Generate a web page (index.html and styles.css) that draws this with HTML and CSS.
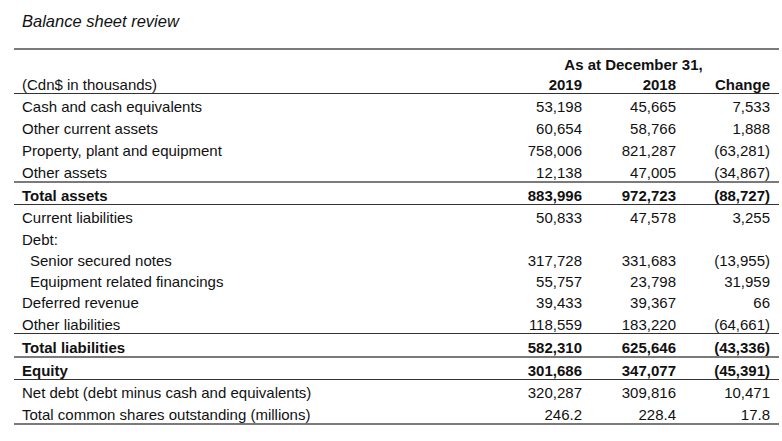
FILE: index.html
```html
<!DOCTYPE html>
<html lang="en">
<head>
<meta charset="utf-8">
<title>Balance sheet review</title>
<link rel="stylesheet" href="styles.css">
</head>
<body>
<div class="page">
  <h1 class="title">Balance sheet review</h1>
  <table class="bs">
    <colgroup>
      <col class="c-label"><col class="c-num"><col class="c-num"><col class="c-chg">
    </colgroup>
    <thead>
      <tr class="h1">
        <th></th>
        <th colspan="3" class="span">As at December 31,</th>
      </tr>
      <tr class="h2 rule-thin">
        <th class="lbl">(Cdn$ in thousands)</th>
        <th class="num">2019</th>
        <th class="num">2018</th>
        <th class="num last">Change</th>
      </tr>
    </thead>
    <tbody>
      <tr class="first"><td class="lbl">Cash and cash equivalents</td><td class="num">53,198</td><td class="num">45,665</td><td class="num last">7,533</td></tr>
      <tr><td class="lbl">Other current assets</td><td class="num">60,654</td><td class="num">58,766</td><td class="num last">1,888</td></tr>
      <tr><td class="lbl">Property, plant and equipment</td><td class="num">758,006</td><td class="num">821,287</td><td class="num last">(63,281)</td></tr>
      <tr class="rule-thick"><td class="lbl">Other assets</td><td class="num">12,138</td><td class="num">47,005</td><td class="num last">(34,867)</td></tr>
      <tr class="total rule-thin short"><td class="lbl">Total assets</td><td class="num">883,996</td><td class="num">972,723</td><td class="num last">(88,727)</td></tr>
      <tr class="tight"><td class="lbl">Current liabilities</td><td class="num">50,833</td><td class="num">47,578</td><td class="num last">3,255</td></tr>
      <tr class="tight"><td class="lbl">Debt:</td><td class="num"></td><td class="num"></td><td class="num last"></td></tr>
      <tr class="tight"><td class="lbl indent">Senior secured notes</td><td class="num">317,728</td><td class="num">331,683</td><td class="num last">(13,955)</td></tr>
      <tr class="tight"><td class="lbl indent">Equipment related financings</td><td class="num">55,757</td><td class="num">23,798</td><td class="num last">31,959</td></tr>
      <tr class="tight"><td class="lbl">Deferred revenue</td><td class="num">39,433</td><td class="num">39,367</td><td class="num last">66</td></tr>
      <tr class="tight rule-thin"><td class="lbl">Other liabilities</td><td class="num">118,559</td><td class="num">183,220</td><td class="num last">(64,661)</td></tr>
      <tr class="total rule-thick"><td class="lbl">Total liabilities</td><td class="num">582,310</td><td class="num">625,646</td><td class="num last">(43,336)</td></tr>
      <tr class="total rule-thin short"><td class="lbl">Equity</td><td class="num">301,686</td><td class="num">347,077</td><td class="num last">(45,391)</td></tr>
      <tr class="short"><td class="lbl">Net debt (debt minus cash and equivalents)</td><td class="num">320,287</td><td class="num">309,816</td><td class="num last">10,471</td></tr>
      <tr class="rule-thick"><td class="lbl">Total common shares outstanding (millions)</td><td class="num">246.2</td><td class="num">228.4</td><td class="num last">17.8</td></tr>
    </tbody>
  </table>
</div>
</body>
</html>
```

FILE: styles.css
```css
html, body {
  margin: 0;
  padding: 0;
  background: #ffffff;
}

body {
  font-family: "Liberation Sans", Arial, sans-serif;
  color: #111111;
}

.page {
  padding: 12px 0 0 14px;
}

.title {
  margin: 0 0 17px 8px;
  font-size: 16.5px;
  line-height: 19px;
  font-style: italic;
  font-weight: normal;
}

.bs {
  width: 765px;
  border-collapse: separate;
  border-spacing: 0;
  table-layout: fixed;
  font-size: 15px;
  line-height: 17px;
  border-top: 2px solid #7a7a7a;
}

.c-label { width: 474px; }
.c-num { width: 94px; }
.c-chg { width: 103px; }

.bs th,
.bs td {
  padding: 5px 0 0 0;
  vertical-align: bottom;
  white-space: nowrap;
  font-weight: normal;
}

.bs th {
  font-weight: bold;
}

.bs .lbl {
  text-align: left;
  padding-left: 8px;
}

.bs th.lbl {
  font-weight: normal;
}

.bs .indent {
  padding-left: 16px;
}

.bs .num {
  text-align: right;
}

.bs .last {
  padding-right: 9px;
}

.bs .span {
  text-align: center;
}

.bs .h1 th { padding-top: 6px; }
.bs .h2 th { padding-top: 3px; }

.bs .first td { padding-top: 4px; }

.bs .tight td { padding-top: 4.3px; }

.bs .short td { padding-top: 4px; }

.bs .total td {
  font-weight: bold;
}

.bs .rule-thin th,
.bs .rule-thin td {
  border-bottom: 1px solid #333333;
}

.bs .rule-thick th,
.bs .rule-thick td {
  border-bottom: 2px solid #7a7a7a;
}
```
